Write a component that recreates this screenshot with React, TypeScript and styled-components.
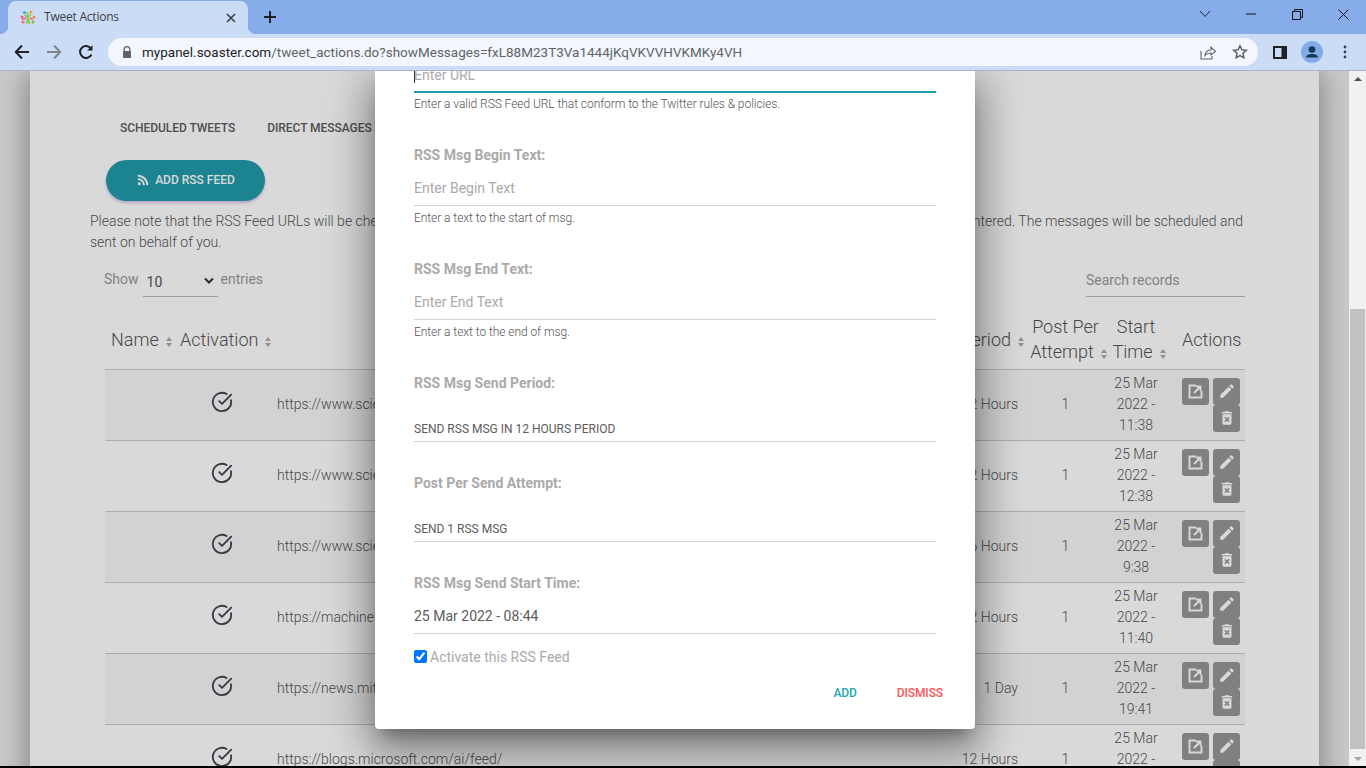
import React from "react";
import styled, { createGlobalStyle } from "styled-components";
import { CircleCheckBig } from "lucide-react";
import { MdEdit, MdDeleteForever } from "react-icons/md";
import { FaRss } from "react-icons/fa";

const Global = createGlobalStyle`
  html, body { margin: 0; padding: 0; height: 100%; overflow: hidden; background: #000; }
  #root { height: 768px; }
  * { box-sizing: border-box; }
`;

const Screen = styled.div`
  width: 1366px; height: 766px; display: flex; flex-direction: column; overflow: hidden;
  font-family: Roboto, "Liberation Sans", sans-serif;
`;
const TabStrip = styled.div`
  height: 34px; background: #86ade9; display: flex; align-items: flex-end; padding-left: 8px; flex: none;
`;
const Tab = styled.div`
  position: relative; width: 240px; height: 33px; background: #cbdcf7; border-radius: 8px 8px 0 0;
  display: flex; align-items: center; padding: 0 12px; gap: 8px;
  &::before, &::after { content: ""; position: absolute; bottom: 0; width: 8px; height: 8px; }
  &::before { left: -8px; background: radial-gradient(circle at 0 0, #86ade9 8px, #cbdcf7 8.5px); }
  &::after { right: -8px; background: radial-gradient(circle at 100% 0, #86ade9 8px, #cbdcf7 8.5px); }
`;
const TabTitle = styled.span`
  flex: 1; font: 12px "Open Sans", "Noto Sans", sans-serif; color: #3c4043; letter-spacing: -0.22px; padding-bottom: 2px;
`;
const NewTab = styled.div`
  width: 28px; height: 28px; margin-left: 8px; margin-bottom: 3px; display: flex; align-items: center; justify-content: center;
`;
const StripSpacer = styled.div`flex: 1;`;
const WinButton = styled.div`
  width: 46px; height: 30px; margin-bottom: 5px; display: flex; align-items: center; justify-content: center;
`;
const Toolbar = styled.div`
  height: 37px; background: #cbdcf7; border-bottom: 1px solid #a8b5cc; display: flex; align-items: center; flex: none;
`;
const NavIcon = styled.div`
  width: 32px; height: 32px; display: flex; align-items: center; justify-content: center; flex: none;
`;
const NavGroup = styled.div`
  display: flex; padding-left: 6px; width: 108px;
`;
const Omnibox = styled.div`
  width: 1150px; height: 28px; border-radius: 14px; background: #f3f7fd; display: flex; align-items: center; padding: 0 2px 0 14px; flex: none;
`;
const Url = styled.div`
  flex: 1; margin-left: 10px; font: 13.48px Roboto, sans-serif; color: #5f6368; white-space: nowrap; letter-spacing: 0.02px;
  b { font-weight: 400; color: #202124; }
`;
const BoxIcons = styled.div`display: flex; gap: 0; align-items: center;`;
const RightIcons = styled.div`
  flex: 1; display: flex; align-items: center; padding-left: 15px;
`;
const Avatar = styled.svg`margin: 0 20px 0 14px; flex: none;`;
const Body = styled.div`
  flex: 1; min-height: 0; display: flex;
`;
const Viewport = styled.div`
  position: relative; flex: 1; overflow: hidden; background: #eeeeee;
`;
const Card = styled.div`
  margin: 0 30px; background: #fff; height: 800px; box-shadow: 0 0 30px rgba(0,0,0,.42);
  padding: 0 74px 0 60px;
`;
const TabsRow = styled.div`
  display: flex; gap: 32px; padding: 48px 0 0 30px; height: 89px;
  color: #5c5c5c; font-size: 12px; font-weight: 500; line-height: 18px; letter-spacing: -0.05px;
`;
const AddButton = styled.div`
  margin-left: 16px; width: 159px; height: 41px; border-radius: 21px; background: #219cab;
  box-shadow: 0 2px 3px rgba(120,60,160,.3);
  color: #fff; font-size: 12px; font-weight: 500; display: flex; align-items: center; justify-content: center; gap: 6px; padding: 0 0 1px 1px;
`;
const Para = styled.div`
  margin-top: 10px; font-size: 14px; font-weight: 300; line-height: 21px; color: #555; width: 1153px;
`;
const ParaLine = styled.div`display: flex; justify-content: space-between;`;
const Controls = styled.div`
  margin-top: 12px; height: 48px; display: flex; justify-content: space-between; padding-left: 14px; width: 1155px; color: #999; font-size: 14px; font-weight: 400;
`;
const Entries = styled.div`display: flex; align-items: flex-start; padding-top: 6px;`;
const SelectBox = styled.div`
  width: 75px; height: 26px; margin: 0 3px 0 4px; border-bottom: 1px solid #bbb; display: flex; justify-content: space-between; padding: 1px 4px 0 4px; color: #555;
  font-size: 14px; line-height: 20px;
`;
const SearchBox = styled.div`
  width: 159px; height: 32px; border-bottom: 1px solid #bbb; padding-top: 7px;
`;
const Table = styled.table`
  margin: 0 0 0 15px; width: 1140px; table-layout: fixed; border-collapse: collapse; color: #555;
`;
const Th = styled.th<{ $align?: string; $w: number; $pl?: number }>`
  width: ${p => p.$w}px; height: 56px; padding: 0 0 3px ${p => p.$pl ?? 0}px; font-size: 18px; font-weight: 300; line-height: 25px; text-align: ${p => p.$align || "left"}; color: #555;
  border-bottom: 1px solid #ccc; white-space: nowrap;
`;
const Tr = styled.tr<{ $odd: boolean }>`
  height: 71px; background: ${p => (p.$odd ? "rgba(0,0,0,.03)" : "transparent")}; border-bottom: 1px solid #ccc;
`;
const Td = styled.td<{ $align?: string; $pl?: number; $pr?: number }>`
  padding: 0 ${p => p.$pr ?? 0}px 0 ${p => p.$pl ?? 0}px; font-size: 14px; font-weight: 300; line-height: 21px; text-align: ${p => p.$align || "left"}; overflow: hidden;
`;
const UrlCell = styled(Td)`white-space: nowrap;`;
const CheckWrap = styled.div`display: flex; justify-content: center; margin-top: -6px;`;
const Sort = styled.span<{ $hang?: boolean }>`
  display: inline-block; width: 7px; height: 10px; margin-left: 7px; margin-right: ${p => (p.$hang ? -7 : 0)}px; vertical-align: -1px; position: relative;
  &::before, &::after { content: ""; position: absolute; left: 0; border-left: 3.5px solid transparent; border-right: 3.5px solid transparent; }
  &::before { top: 0; border-bottom: 4px solid #aaa; }
  &::after { bottom: 0; border-top: 4px solid #aaa; }
`;
const Actions = styled.div`
  display: flex; flex-wrap: wrap; justify-content: flex-end; column-gap: 4px; width: 58px; margin: 0 0 0 16px;
`;
const ActionBtn = styled.div`
  width: 27px; height: 27px; border-radius: 3px; background: #979797; color: #fff; display: flex; align-items: center; justify-content: center;
`;
const Overlay = styled.div`
  position: absolute; inset: 0; background: rgba(0,0,0,.15);
`;
const Modal = styled.div`
  position: absolute; left: 375px; bottom: 37px; width: 600px; background: #fff; border-radius: 0 0 4px 4px;
  padding: 0 39px 0 39px;
  box-shadow: 0 24px 38px 3px rgba(0,0,0,.24), 0 9px 46px 8px rgba(0,0,0,.22), 0 11px 15px -7px rgba(0,0,0,.3);
`;
const FieldInput = styled.div<{ $h: number; $active?: boolean; $small?: boolean; $value?: boolean }>`
  position: relative; height: ${p => p.$h}px; display: flex; align-items: flex-end; padding-bottom: ${p => (p.$active ? 7 : p.$small ? 3 : 8)}px;
  width: 522px; border-bottom: ${p => (p.$active ? "2px solid #219cab" : "1px solid #d4d4d4")};
  font-size: ${p => (p.$small ? 12 : 14)}px; line-height: 18px;
  color: ${p => (p.$value ? "#5c5c5c" : "#aaa")};
`;
const Caret = styled.span`
  position: absolute; left: 0; bottom: 8px; width: 1px; height: 16px; background: #333;
`;
const Help = styled.div<{ $first?: boolean }>`
  font-size: 12px; font-weight: 300; line-height: 18px; color: #555; height: 18px; margin-top: ${p => (p.$first ? 2 : 3)}px; letter-spacing: -0.06px;
`;
const Label = styled.div<{ $mt: number }>`
  font-size: 14px; font-weight: 700; line-height: 20px; color: #aaa; height: 20px; margin-top: ${p => p.$mt}px;
`;
const CheckRow = styled.label`
  display: flex; align-items: center; height: 24px; margin-top: 11px; color: #aaa; font-size: 14px; line-height: 20px;
  input { margin: 0 3px 0 0; width: 13px; height: 13px; accent-color: #0075ff; position: relative; top: -1px; }
`;
const ModalActions = styled.div`
  display: flex; justify-content: flex-end; gap: 40px; margin: 15px -7px 0 0; height: 45px;
  font-size: 12px; font-weight: 500; line-height: 18px; letter-spacing: -0.1px;
`;
const ModalAction = styled.span<{ $c: string }>`color: ${p => p.$c};`;
const Scrollbar = styled.div`
  width: 17px; flex: none; background: #f1f1f1; display: flex; flex-direction: column; align-items: center; padding-top: 6px;
`;
const ThumbGap = styled.div`height: 228px; flex: none;`;
const Thumb = styled.div`width: 15px; height: 440px; background: #c1c1c1; flex: none;`;
const ScrollArrow = styled.div<{ $down?: boolean }>`
  width: 0; height: 0; border-left: 4px solid transparent; border-right: 4px solid transparent; flex: none;
  ${p => (p.$down ? "border-top: 4px solid #a3a3a3; margin-top: 8px;" : "border-bottom: 4px solid #505050;")}
`;

const rows = [
  ["https://www.sciencedaily.com/rss/computers_math/artificial_intelligence.xml", "12 Hours", "11:38"],
  ["https://www.sciencedaily.com/rss/computers_math/robotics.xml", "12 Hours", "12:38"],
  ["https://www.sciencedaily.com/rss/computers_math/computer_science.xml", "6 Hours", "9:38"],
  ["https://machinelearningmastery.com/blog/feed/", "12 Hours", "11:40"],
  ["https://news.mit.edu/rss/topic/artificial-intelligence2", "1 Day", "19:41"],
  ["https://blogs.microsoft.com/ai/feed/", "12 Hours", "8:44"],
];

const Favicon = () => (
  <svg width="16" height="16" viewBox="0 0 16 16">
    <circle cx="4.5" cy="2.5" r="1.6" fill="#2bb6c9" /><circle cx="11" cy="2" r="1.6" fill="#f5a623" />
    <circle cx="2" cy="7" r="1.5" fill="#e9578f" /><circle cx="14" cy="7" r="1.5" fill="#f0902a" />
    <circle cx="3" cy="12" r="1.6" fill="#f3728b" /><circle cx="13" cy="12" r="1.6" fill="#7ac143" />
    <path d="M8 2.5 7 7 4.5 5M8 7l3-2.5M8 7 6.5 13.5M8 7l1.5 7" stroke="#8dc63f" strokeWidth="1.6" fill="none" />
    <path d="M6 8 2 9.5M10 8l3 1.5" stroke="#f0648a" strokeWidth="1.6" fill="none" />
  </svg>
);
const OpenIcon = () => (
  <svg width="15" height="15" viewBox="0 0 15 15" fill="none" stroke="currentColor" strokeWidth="1.9">
    <path d="M8 1.500H1.500v12h12V7" />
    <path d="M6 9l6-6M8 2.500h4.500V7" />
  </svg>
);

export default function App() {
  return (
    <Screen>
      <Global />
      <TabStrip>
        <Tab>
          <Favicon />
          <TabTitle>Tweet Actions</TabTitle>
          <svg width="10" height="10" viewBox="0 0 10 10" stroke="#3c4043" strokeWidth="1.6"><path d="M1 1l8 8M9 1l-8 8" /></svg>
        </Tab>
        <NewTab>
          <svg width="14" height="14" viewBox="0 0 14 14" stroke="#1f2124" strokeWidth="2"><path d="M7 1v12M1 7h12" /></svg>
        </NewTab>
        <StripSpacer />
        <WinButton>
          <svg width="12" height="8" viewBox="0 0 12 8" fill="none" stroke="#1f2a3a" strokeWidth="1"><path d="M1 1l5 5.5L11 1" /></svg>
        </WinButton>
        <WinButton>
          <svg width="10" height="2" viewBox="0 0 10 2" stroke="#111"><path d="M0 1h10" /></svg>
        </WinButton>
        <WinButton>
          <svg width="11" height="11" viewBox="0 0 11 11" fill="none" stroke="#111"><path d="M.5 2.500h8v8h-8zM2.500 2.500v-2h8v8h-2" /></svg>
        </WinButton>
        <WinButton>
          <svg width="11" height="11" viewBox="0 0 11 11" stroke="#111"><path d="M.5.5l10 10M10.500.5l-10 10" /></svg>
        </WinButton>
      </TabStrip>
      <Toolbar>
        <NavGroup>
          <NavIcon>
            <svg width="16" height="16" viewBox="0 0 16 16" fill="none" stroke="#202124" strokeWidth="2"><path d="M15 8H2M8 1.500 1.800 8 8 14.500" /></svg>
          </NavIcon>
          <NavIcon>
            <svg width="16" height="16" viewBox="0 0 16 16" fill="none" stroke="#80868b" strokeWidth="2"><path d="M1 8h13M8 1.500 14.200 8 8 14.500" /></svg>
          </NavIcon>
          <NavIcon>
            <svg width="16" height="16" viewBox="0 0 16 16" fill="none" stroke="#202124" strokeWidth="2"><path d="M13.500 10.500A6 6 0 1 1 13 4.500" /><path d="M14.500 1.200v5.300H9.200z" fill="#202124" stroke="none" /></svg>
          </NavIcon>
        </NavGroup>
        <Omnibox>
          <svg width="10" height="12" viewBox="0 0 10 12"><path d="M2.200 5V3.500a2.800 2.800 0 0 1 5.600 0V5" fill="none" stroke="#5f6368" strokeWidth="1.300" /><rect x="1" y="5" width="8" height="7" rx="1" fill="#5f6368" /></svg>
          <Url><b>mypanel.soaster.com</b>/tweet_actions.do?showMessages=fxL88M23T3Va1444jKqVKVVHVKMKy4VH</Url>
          <BoxIcons>
            <NavIcon>
              <svg width="16" height="15" viewBox="0 0 16 15" fill="none" stroke="#5f6368" strokeWidth="1.100"><path d="M1 6v8h11V11" /><path d="M5 10.500c.4-3.500 3-5.500 6-5.500V2l4.500 4.500L11 10V8c-2.500 0-4.500.7-6 2.500z" /></svg>
            </NavIcon>
            <NavIcon>
              <svg width="16" height="16" viewBox="0 0 16 16" fill="none" stroke="#5f6368" strokeWidth="1.500"><path d="M8 1.800l1.900 4 4.400.5-3.300 3 .9 4.400L8 11.500l-3.900 2.200.9-4.400-3.300-3 4.400-.5z" /></svg>
            </NavIcon>
          </BoxIcons>
        </Omnibox>
        <RightIcons>
          <svg width="14" height="13" viewBox="0 0 14 13"><rect width="14" height="13" fill="#202124" /><rect x="2" y="2" width="6.500" height="9" fill="#cbdcf7" /></svg>
          <Avatar width="22" height="22" viewBox="0 0 22 22"><circle cx="11" cy="11" r="11" fill="#82ace6" /><circle cx="11" cy="8.500" r="3.300" fill="#12365f" /><path d="M5 16.500c0-2.500 3-3.500 6-3.500s6 1 6 3.500z" fill="#12365f" /></Avatar>
          <svg width="4" height="14" viewBox="0 0 4 14" fill="#3c4043"><circle cx="2" cy="2" r="1.400" /><circle cx="2" cy="7" r="1.400" /><circle cx="2" cy="12" r="1.400" /></svg>
        </RightIcons>
      </Toolbar>
      <Body>
        <Viewport>
          <Card>
            <TabsRow>
              <span>SCHEDULED TWEETS</span>
              <span>DIRECT MESSAGES</span>
              <span>RSS FEEDS</span>
            </TabsRow>
            <AddButton><FaRss size={12} />ADD RSS FEED</AddButton>
            <Para>
              <ParaLine>
                <span>Please note that the RSS Feed URLs will be checked</span>
                <span>entered. The messages will be scheduled and</span>
              </ParaLine>
              sent on behalf of you.
            </Para>
            <Controls>
              <Entries>
                Show
                <SelectBox>
                  10
                  <svg width="10" height="16" viewBox="0 0 10 16" fill="none" stroke="#333" strokeWidth="2"><path d="M1 6.500l4 4 4-4" /></svg>
                </SelectBox>
                entries
              </Entries>
              <SearchBox>Search records</SearchBox>
            </Controls>
            <Table>
              <thead>
                <tr>
                  <Th $w={69} $pl={6}>Name<Sort /></Th>
                  <Th $w={96} $pl={6}>Activation<Sort /></Th>
                  <Th $w={685} $align="center">URL</Th>
                  <Th $w={70} $align="right">Period<Sort /></Th>
                  <Th $w={81} $align="center">Post Per<br />Attempt<Sort $hang /></Th>
                  <Th $w={60} $align="center">Start<br />Time<Sort $hang /></Th>
                  <Th $w={79} $pl={16}>Actions</Th>
                </tr>
              </thead>
              <tbody>
                {rows.map((r, i) => (
                  <Tr key={r[0]} $odd={i % 2 === 0}>
                    <Td />
                    <Td><CheckWrap><CircleCheckBig size={22} strokeWidth={2} color="#3d4650" /></CheckWrap></Td>
                    <UrlCell $pl={7}>{r[0]}</UrlCell>
                    <Td $align="right" $pr={7}>{r[1]}</Td>
                    <Td $align="center">1</Td>
                    <Td $align="center">25 Mar 2022 - {r[2]}</Td>
                    <Td>
                      <Actions>
                        <ActionBtn><OpenIcon /></ActionBtn>
                        <ActionBtn><MdEdit size={18} /></ActionBtn>
                        <ActionBtn><MdDeleteForever size={18} /></ActionBtn>
                      </Actions>
                    </Td>
                  </Tr>
                ))}
              </tbody>
            </Table>
          </Card>
          <Overlay />
          <Modal>
            <FieldInput $h={24} $active>Enter URL<Caret /></FieldInput>
            <Help $first>Enter a valid RSS Feed URL that conform to the Twitter rules &amp; policies.</Help>
            <Label $mt={32}>RSS Msg Begin Text:</Label>
            <FieldInput $h={41}>Enter Begin Text</FieldInput>
            <Help>Enter a text to the start of msg.</Help>
            <Label $mt={32}>RSS Msg End Text:</Label>
            <FieldInput $h={41}>Enter End Text</FieldInput>
            <Help>Enter a text to the end of msg.</Help>
            <Label $mt={32}>RSS Msg Send Period:</Label>
            <FieldInput $h={49} $small $value>SEND RSS MSG IN 12 HOURS PERIOD</FieldInput>
            <Label $mt={31}>Post Per Send Attempt:</Label>
            <FieldInput $h={49} $small $value>SEND 1 RSS MSG</FieldInput>
            <Label $mt={31}>RSS Msg Send Start Time:</Label>
            <FieldInput $h={41} $value>25 Mar 2022 - 08:44</FieldInput>
            <CheckRow><input type="checkbox" defaultChecked readOnly />Activate this RSS Feed</CheckRow>
            <ModalActions>
              <ModalAction $c="#26a6b5">ADD</ModalAction>
              <ModalAction $c="#f55">DISMISS</ModalAction>
            </ModalActions>
          </Modal>
        </Viewport>
        <Scrollbar>
          <ScrollArrow />
          <ThumbGap />
          <Thumb />
          <ScrollArrow $down />
        </Scrollbar>
      </Body>
    </Screen>
  );
}
